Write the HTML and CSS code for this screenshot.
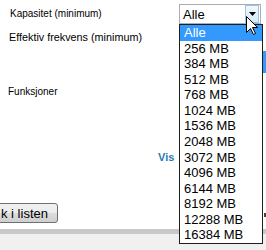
FILE: index.html
```html
<!DOCTYPE html>
<html lang="no">
<head>
    <meta charset="UTF-8">
    <meta name="viewport" content="width=device-width, initial-scale=1.0">
    <title>Filter</title>
    <link rel="stylesheet" href="styles.css">
</head>
<body>
<div class="page">
    <div class="field-row">
        <span class="label">Kapasitet (minimum)</span>
        <div class="select">
            <span class="select-value">Alle</span>
            <span class="select-btn">
                <svg width="7" height="4" viewBox="0 0 7 4"><path d="M0 0h7L3.5 4z" fill="#000"/></svg>
            </span>
        </div>
    </div>
    <div class="field-row second">
        <span class="label wide">Effektiv frekvens (minimum)</span>
    </div>
    <div class="section-label">Funksjoner</div>
    <div class="show-link"><a href="#">Vis</a></div>
    <div class="actions">
        <button class="list-btn">k i listen</button>
    </div>
    <div class="footer"></div>

    <ul class="dropdown">
        <li class="selected">Alle</li>
        <li>256 MB</li>
        <li>384 MB</li>
        <li>512 MB</li>
        <li>768 MB</li>
        <li>1024 MB</li>
        <li>1536 MB</li>
        <li>2048 MB</li>
        <li>3072 MB</li>
        <li>4096 MB</li>
        <li>6144 MB</li>
        <li>8192 MB</li>
        <li>12288 MB</li>
        <li>16384 MB</li>
    </ul>
    <div class="edge-strip"></div>
    <div class="edge-mark"></div>

    <svg class="cursor" width="13" height="20" viewBox="0 0 13 20">
        <path d="M0.5 0.5 L0.5 16.5 L4.5 12.5 L7.5 18.5 L9.5 17.5 L6.5 11.5 L11.5 11.5 Z" fill="#fff" stroke="#000" stroke-width="1" stroke-linejoin="round"/>
    </svg>
</div>
</body>
</html>
```

FILE: styles.css
```css
body {
    margin: 0;
    font-family: "Liberation Sans", Arial, sans-serif;
    font-size: 10px;
    color: #000;
    background: #fff;
}

.page {
    position: relative;
    width: 266px;
    height: 250px;
    overflow: hidden;
}

.field-row {
    display: grid;
    grid-template-columns: 169px 82px;
    align-items: center;
    padding: 4px 0 0 10px;
    height: 20px;
}

.field-row.second {
    padding-top: 0;
    margin-top: 7px;
    height: 12px;
    line-height: 12px;
    padding-left: 9px;
    white-space: nowrap;
}

.label {
    line-height: 12px;
    white-space: nowrap;
}

.label.wide {
    font-size: 10.8px;
}

.select {
    box-sizing: border-box;
    height: 20px;
    border: 1px solid #abadb3;
    display: flex;
    align-items: center;
    justify-content: space-between;
    font-size: 13px;
    padding-left: 3px;
}

.select-btn {
    box-sizing: border-box;
    width: 14px;
    height: 18px;
    margin-right: 1px;
    border: 1px solid #9cc3e6;
    background: linear-gradient(#f0f7fd, #d6e9f8);
    display: flex;
    align-items: center;
    justify-content: center;
}

.section-label {
    margin: 43px 0 0 8px;
    line-height: 12px;
}

.show-link {
    margin-top: 53px;
    padding-left: 158px;
    line-height: 13px;
}

.show-link a {
    font-size: 11px;
    font-weight: bold;
    color: #2a7ab8;
    text-decoration: none;
}

.actions {
    margin-top: 39px;
    height: 20px;
}

.list-btn {
    box-sizing: border-box;
    height: 20px;
    margin-left: -10px;
    padding: 0 9px 0 10px;
    border: 1px solid #707070;
    border-radius: 3px;
    background: linear-gradient(#f2f2f2 0%, #ebebeb 50%, #dddddd 51%, #cfcfcf 100%);
    font-family: "Liberation Sans", Arial, sans-serif;
    font-size: 13px;
    color: #000;
}

.footer {
    margin-top: 6px;
    height: 30px;
    border-top: 5px solid #c8c8c8;
    background: #f0f0f0;
}

.dropdown {
    position: absolute;
    left: 179px;
    top: 24px;
    box-sizing: border-box;
    width: 84px;
    height: 220px;
    margin: 0;
    padding: 0;
    list-style: none;
    border: 1px solid #1e1e1e;
    background: #fff;
    font-size: 13px;
}

.dropdown li {
    height: 15.57px;
    line-height: 15.57px;
    padding-left: 4px;
    white-space: nowrap;
}

.dropdown li.selected {
    background: #3399ff;
    color: #fff;
}

.edge-strip {
    position: absolute;
    left: 263px;
    top: 51px;
    width: 3px;
    height: 22px;
    background: #3399ff;
}

.edge-mark {
    position: absolute;
    left: 264px;
    top: 213px;
    width: 2px;
    height: 4px;
    background: #5a3a2a;
}

.cursor {
    position: absolute;
    left: 246px;
    top: 16px;
}
```
